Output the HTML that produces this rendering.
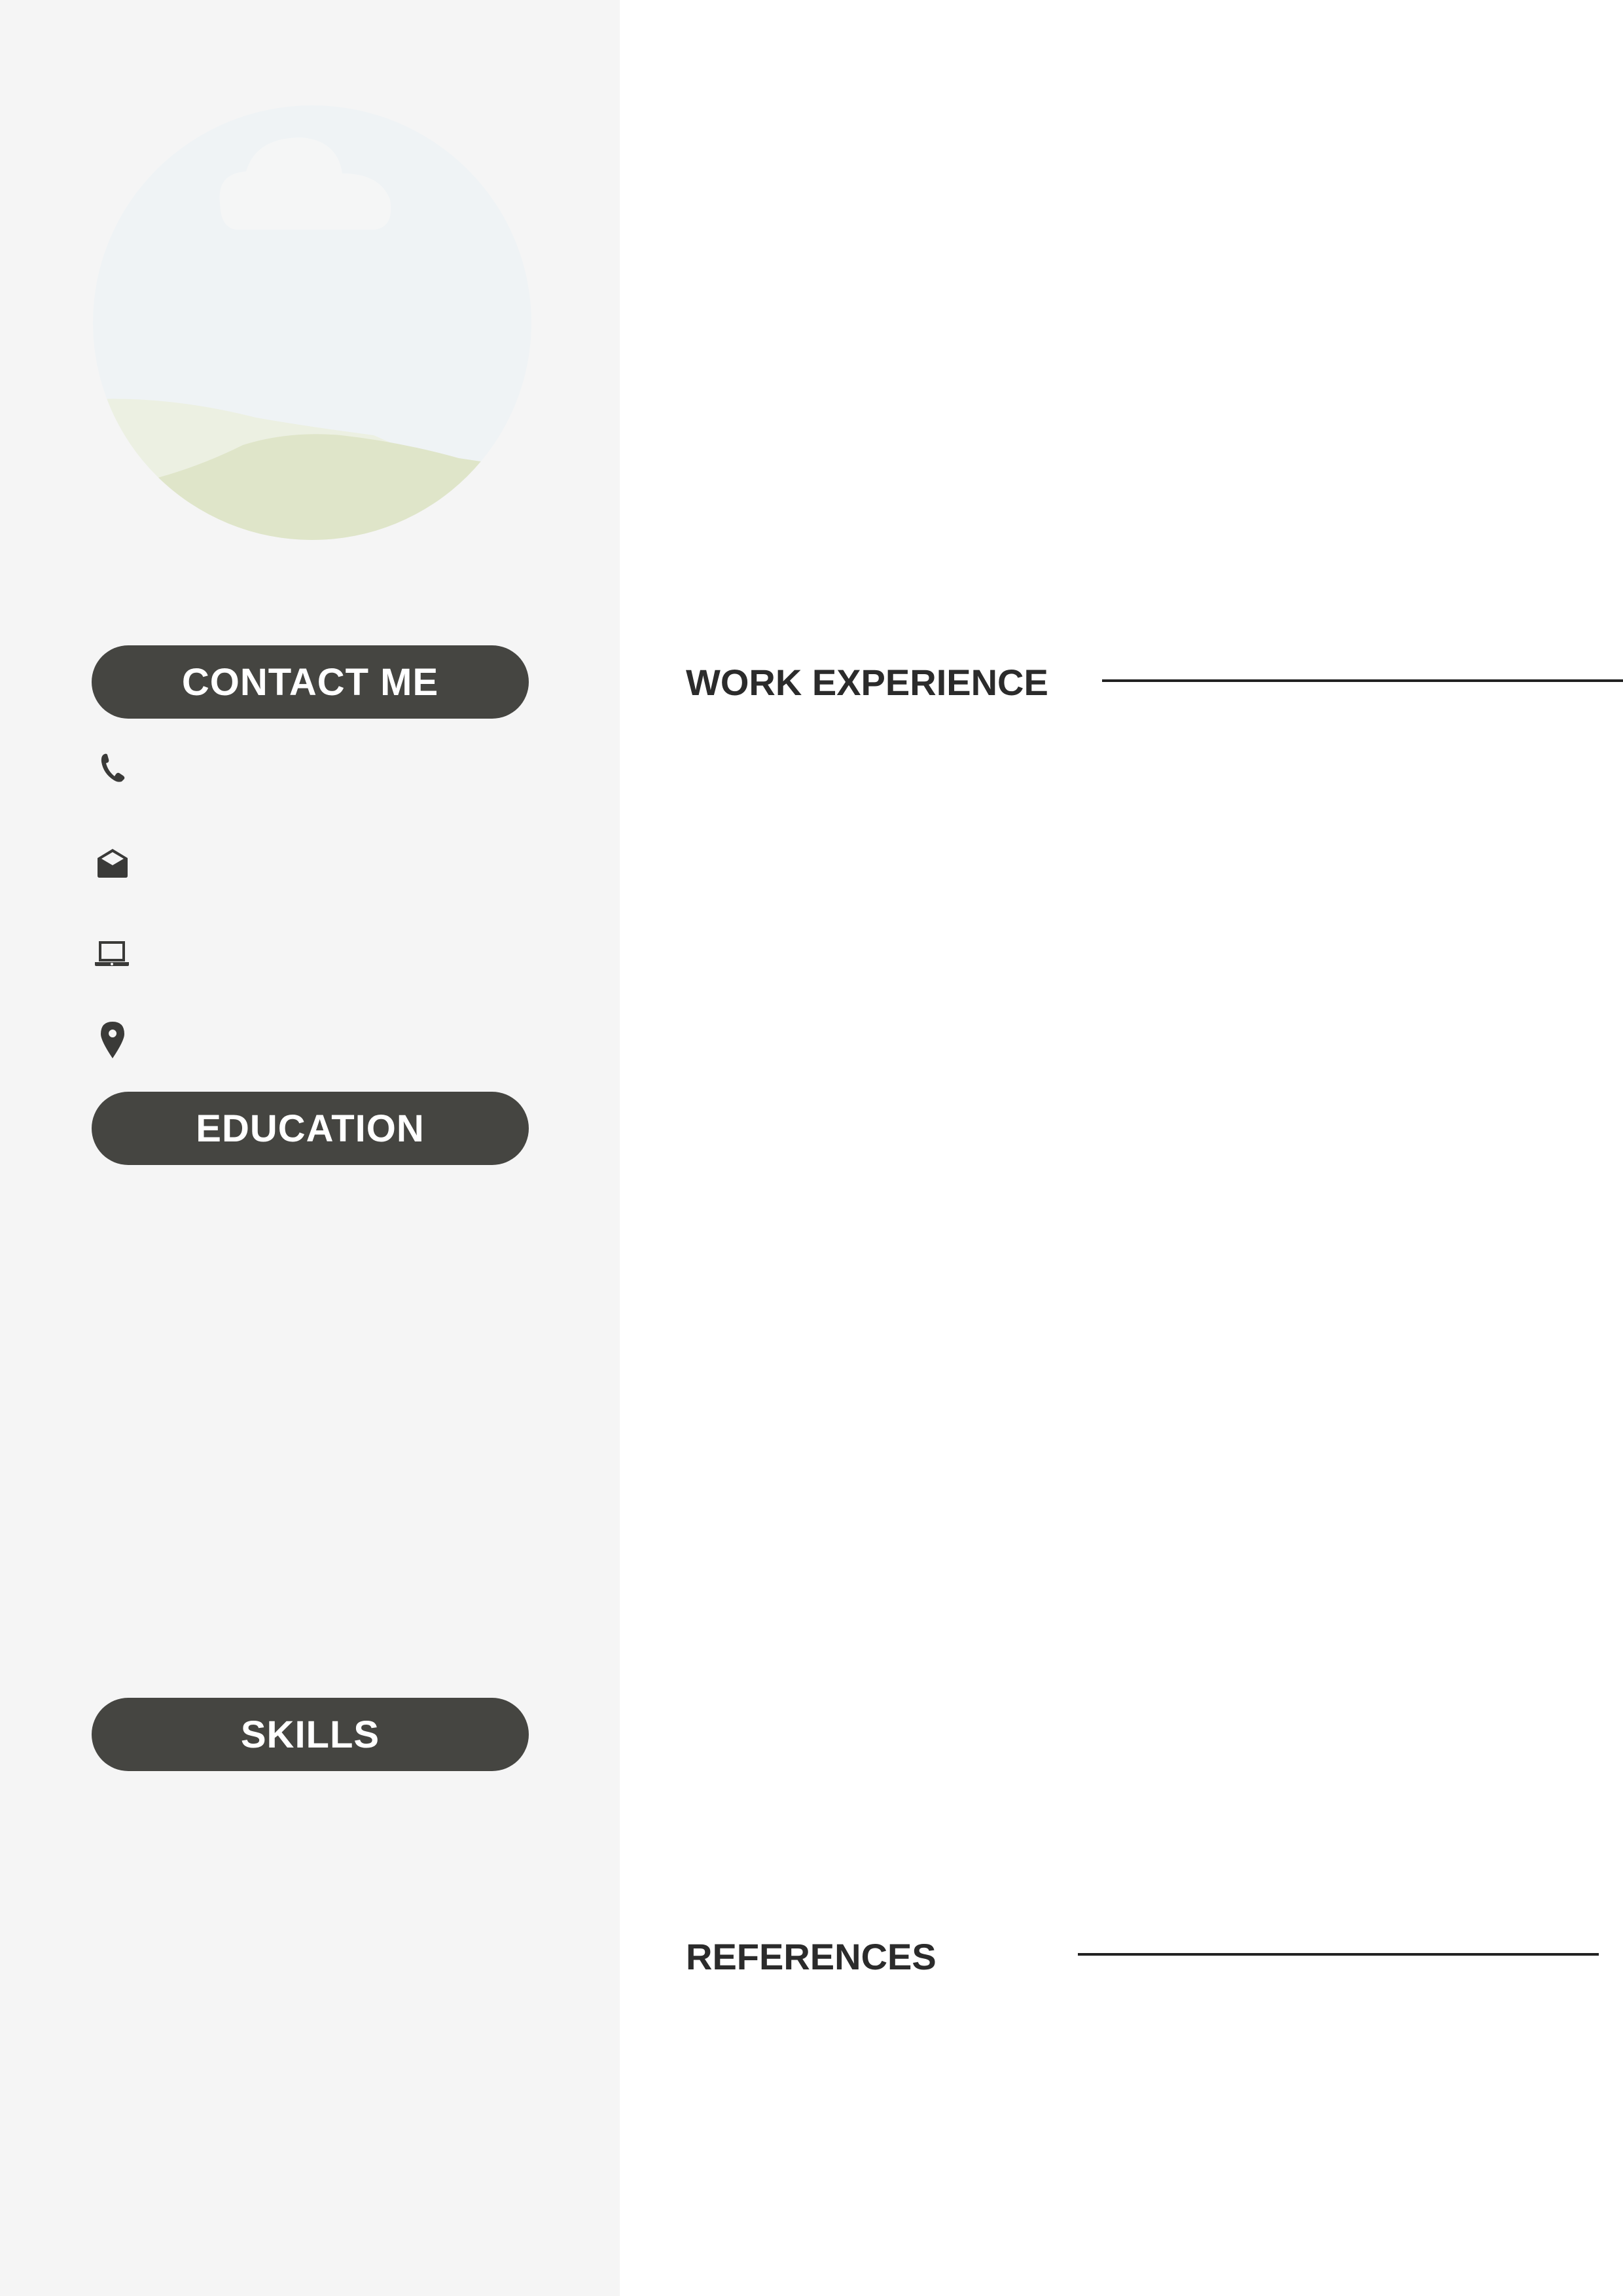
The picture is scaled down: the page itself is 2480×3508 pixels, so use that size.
<!DOCTYPE html>
<html><head><meta charset="utf-8"><style>
html,body{margin:0;padding:0}
body{width:2480px;height:3508px;position:relative;background:#fff;font-family:"Liberation Sans",sans-serif;overflow:hidden}
.side{position:absolute;left:0;top:0;width:947px;height:3508px;background:#f5f5f5}
.pill{position:absolute;left:140px;width:668px;height:112px;border-radius:56px;background:#454541;color:#fff;font-size:58px;font-weight:bold;letter-spacing:1px;text-align:center;line-height:114px}
.h{position:absolute;left:1048px;font-size:56px;font-weight:bold;color:#2b2b2b;line-height:70px}
.line{position:absolute;height:4px;background:#222}
svg{position:absolute}
</style></head><body>
<div class="side"></div>
<svg style="left:141px;top:160px" width="672" height="666" viewBox="0 0 672 666">
<defs><clipPath id="c"><ellipse cx="336" cy="333" rx="335" ry="332"/></clipPath></defs>
<g clip-path="url(#c)">
<rect width="672" height="666" fill="#eff3f5"/>
<path d="M195 150 Q190 105 235 102 Q250 50 320 50 Q375 55 382 105 Q440 105 455 145 Q462 188 430 191 L220 191 Q196 188 195 150Z" fill="#f5f6f6"/>
<path d="M0 450 Q120 445 250 478 Q330 492 430 505 Q520 545 600 570 L672 580 L672 666 L0 666Z" fill="#ecf0e2"/>
<path d="M60 580 Q150 560 230 520 Q300 498 380 505 Q470 515 560 540 L640 552 L672 560 L672 666 L0 666Z" fill="#dfe5c9"/>
</g></svg>
<div class="pill" style="top:986px">CONTACT ME</div>
<div class="pill" style="top:1668px">EDUCATION</div>
<div class="pill" style="top:2594px">SKILLS</div>
<svg style="left:150px;top:1150px" width="44" height="48" viewBox="0 0 44 48"><path d="M10 2 Q4 4 5 14 Q8 32 24 42 Q30 46 36 44 L40 40 Q41 37 38 35 L32 31 Q29 30 27 33 L25 36 Q15 28 12 16 L15 15 Q17 13 16 10 L14 3 Q13 1 10 2Z" fill="#3a3a38"/></svg>
<svg style="left:147px;top:1296px" width="50" height="46" viewBox="0 0 50 46"><path d="M25 1 L2 15 L2 42 Q2 45 5 45 L45 45 Q48 45 48 42 L48 15 Z M25 6 L42 16 L25 26 L8 16Z" fill="#3a3a38" fill-rule="evenodd"/></svg>
<svg style="left:144px;top:1436px" width="54" height="42" viewBox="0 0 54 42"><path d="M7 2 L47 2 L47 33 L7 33 Z M11 6 L11 29 L43 29 L43 6Z" fill="#3a3a38" fill-rule="evenodd"/><path d="M1 34 L53 34 L53 38 Q53 40 51 40 L3 40 Q1 40 1 38Z" fill="#3a3a38"/><circle cx="27" cy="37" r="2" fill="#f5f5f5"/></svg>
<svg style="left:152px;top:1560px" width="40" height="58" viewBox="0 0 40 58"><path d="M20 1 Q38 1 38 20 Q38 30 20 57 Q2 30 2 20 Q2 1 20 1Z M20 13 A6 6 0 1 0 20.1 13Z" fill="#3a3a38" fill-rule="evenodd"/></svg>
<div class="h" style="top:1008px">WORK EXPERIENCE</div>
<div class="line" style="left:1684px;top:1038px;width:796px"></div>
<div class="h" style="top:2955px">REFERENCES</div>
<div class="line" style="left:1647px;top:2984px;width:796px"></div>
</body></html>
